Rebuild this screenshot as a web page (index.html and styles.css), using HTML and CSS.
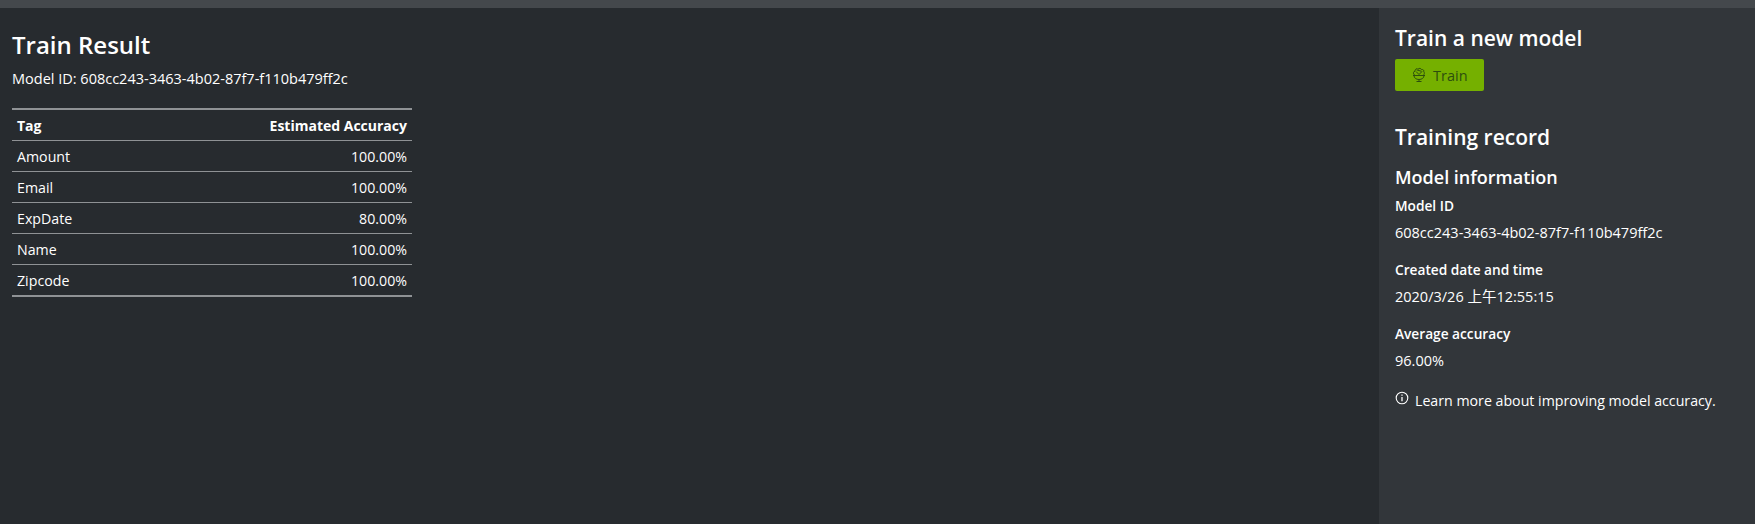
FILE: index.html
```html
<!DOCTYPE html>
<html lang="en">
<head>
  <meta charset="UTF-8">
  <title>Train</title>
  <link rel="stylesheet" href="styles.css">
</head>
<body>

<div class="top-bar"></div>

<div class="main-wrapper">
  <!-- Left: train result -->
  <div class="result">
    <h2>Train Result</h2>
    <p class="model-id">Model ID: 608cc243-3463-4b02-87f7-f110b479ff2c</p>
    <table class="accuracy">
      <thead>
        <tr><th>Tag</th><th class="num">Estimated Accuracy</th></tr>
      </thead>
      <tbody>
        <tr><td>Amount</td><td class="num">100.00%</td></tr>
        <tr><td>Email</td><td class="num">100.00%</td></tr>
        <tr><td>ExpDate</td><td class="num">80.00%</td></tr>
        <tr><td>Name</td><td class="num">100.00%</td></tr>
        <tr><td>Zipcode</td><td class="num">100.00%</td></tr>
      </tbody>
    </table>
  </div>

  <!-- Right: sidebar -->
  <div class="side">
    <h3 class="train-title">Train a new model</h3>
    <button class="train-btn" type="button">
      <svg class="paw" width="14" height="16" viewBox="0 0 14 16" fill="none" stroke="currentColor" stroke-width="1">
        <path d="M2 8.500c0 2.500 2.200 4 5 4s5-1.500 5-4"/>
        <path d="M1 8.500h12"/>
        <path d="M2.500 8C.8 6.800 1.300 4.300 3 4.200 3 2 5 .8 6 2.300 7 .8 9 1.200 9.500 2.600c1.500-.5 2.800.8 2.300 2.200 1 1 .5 2.600-.3 3.200"/>
        <path d="M4 4.500l3 3 3-3M4.500 2.800l5 1.500"/>
        <path d="M4.500 14.500h5M7 12.500v2"/>
      </svg>
      <span>Train</span>
    </button>

    <h3 class="record-title">Training record</h3>
    <h4>Model information</h4>
    <div class="field-label">Model ID</div>
    <div class="field-value">608cc243-3463-4b02-87f7-f110b479ff2c</div>
    <div class="field-label">Created date and time</div>
    <div class="field-value">2020/3/26 上午12:55:15</div>
    <div class="field-label">Average accuracy</div>
    <div class="field-value">96.00%</div>
    <div class="learn">
      <svg width="14" height="14" viewBox="0 0 14 14" fill="none" stroke="currentColor">
        <circle cx="7" cy="7" r="5.800" stroke-width="1.100"/>
        <path d="M7 6v4.200" stroke-width="1.300"/>
        <path d="M7 3.500v1.300" stroke-width="1.300"/>
      </svg>
      <span>Learn more about improving model accuracy.</span>
    </div>
  </div>
</div>

</body>
</html>
```

FILE: styles.css
```css
body {
  margin: 0;
  height: 524px;
  overflow: hidden;
  font-family: "Open Sans", "Noto Sans CJK SC", sans-serif;
  font-size: 14.500px;
  background-color: #272b2f;
  color: #fff;
}

.top-bar {
  height: 8px;
  background: #44484c;
}

.main-wrapper {
  display: flex;
  height: 516px;
}

.result {
  flex: 1;
  padding: 22px 12px 0;
}

.result h2 {
  margin: 0;
  font-size: 24px;
  line-height: 30px;
  font-weight: 600;
}

.model-id {
  margin: 8px 0 0;
  line-height: 21px;
}

.accuracy {
  width: 400px;
  margin-top: 19px;
  border-collapse: collapse;
  border-top: 2px solid #8f9295;
  border-bottom: 2px solid #8f9295;
}

.accuracy th, .accuracy td {
  height: 30px;
  padding: 0 5px;
  text-align: left;
  font-size: 14.200px;
  line-height: 21px;
  border-top: 1px solid #8f9295;
}

.accuracy th {
  font-size: 14px;
  font-weight: 700;
  border-top: none;
}

.accuracy .num {
  text-align: right;
}

.side {
  width: 376px;
  box-sizing: border-box;
  padding: 17px 16px 0;
  background: #32363a;
}

.side h3 {
  margin: 0;
  font-size: 21px;
  line-height: 26px;
  font-weight: 600;
}

.train-btn {
  display: flex;
  align-items: center;
  gap: 7px;
  width: 89px;
  height: 32px;
  margin-top: 8px;
  padding: 0 0 0 17px;
  background-color: #75b000;
  color: #2d4f0e;
  border: none;
  border-radius: 2px;
  font-family: inherit;
  font-size: 14.500px;
}

.side .record-title {
  margin-top: 33px;
}

.side h4 {
  margin: 15px 0 0;
  font-size: 18px;
  line-height: 24px;
  font-weight: 600;
}

.field-label {
  margin-top: 5px;
  font-size: 13.700px;
  line-height: 24px;
  font-weight: 600;
}

.field-value {
  margin-top: 4px;
  margin-bottom: 15px;
  line-height: 21px;
}

.learn {
  display: flex;
  align-items: flex-start;
  gap: 6px;
  font-size: 14.200px;
  line-height: 21px;
  margin-top: 19px;
}

.learn svg {
  flex: none;
  margin-top: 1px;
}
```
